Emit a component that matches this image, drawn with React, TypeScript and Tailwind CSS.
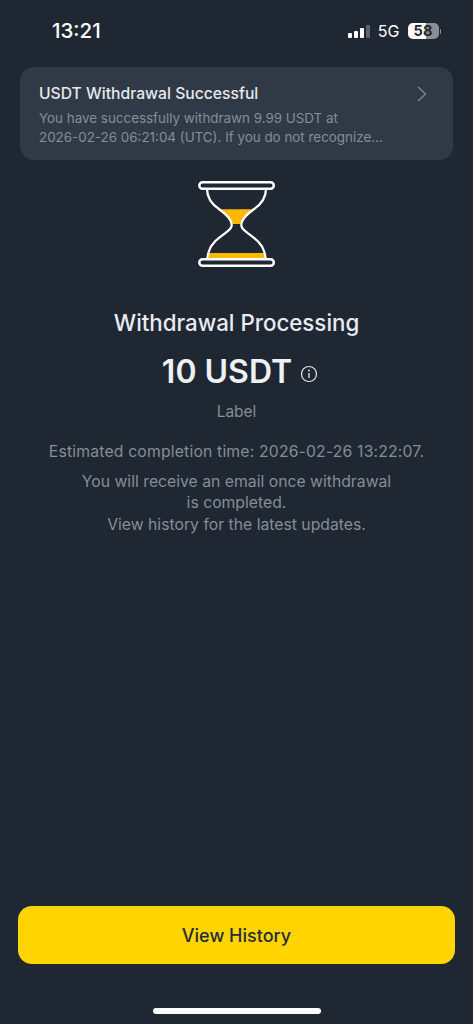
import React from "react";

function Hourglass() {
  return (
    <svg width="80" height="90" viewBox="0 0 80 90" fill="none" className="-translate-x-[0.5px]">
      <path d="M21 29.300H59C55 33 45.500 38 45 44H35C34.500 38 25 33 21 29.300Z" fill="#FFB800" />
      <rect x="12" y="73" width="56" height="6" fill="#FFB800" />
      <path
        d="M10.500 9C10.500 18 15 24 22.800 29.300C28 33 35.200 39 35.200 45C35.200 49 32 50.500 28.500 53.300C21 59 15 63 12.500 71C11.500 74 11 76 11 79M69.500 9C69.500 18 65 24 57.200 29.300C52 33 44.800 39 44.800 45C44.800 49 48 50.500 51.500 53.300C59 59 65 63 67.500 71C68.500 74 69 76 69 79"
        stroke="white"
        strokeWidth="2.300"
      />
      <rect x="2.800" y="2.200" width="74.500" height="6.600" rx="3.300" fill="#1F2732" stroke="white" strokeWidth="2.500" />
      <rect x="2.800" y="79.200" width="74.500" height="6.600" rx="3.300" fill="#1F2732" stroke="white" strokeWidth="2.500" />
    </svg>
  );
}

function Signal() {
  return (
    <div className="flex items-end gap-[2px] h-[13px]">
      <span className="w-[4px] h-[5px] rounded-[1px] bg-white" />
      <span className="w-[4px] h-[7px] rounded-[1px] bg-white" />
      <span className="w-[4px] h-[10px] rounded-[1px] bg-white" />
      <span className="w-[4px] h-[13px] rounded-[1px] bg-[#5d636b]" />
    </div>
  );
}

function Battery() {
  return (
    <div className="flex items-center gap-[1px]">
      <div className="w-[31px] h-[16px] rounded-[5px] bg-[linear-gradient(90deg,#ffffff_0%,#ffffff_58%,#8b8e92_58%,#8b8e92_100%)] flex items-center justify-center">
        <span className="text-[14.500px] leading-none font-bold text-[#23272e] tracking-[0.2px]">58</span>
      </div>
      <span className="w-[1.500px] h-[5px] rounded-r-sm bg-[#8b8e92]" />
    </div>
  );
}

export default function App() {
  return (
    <div
      className="w-[473px] h-[1024px] bg-[#1f2732] flex flex-col overflow-hidden"
      style={{ fontFamily: "Inter, 'Noto Sans', sans-serif" }}
    >
      <div className="h-[67px] shrink-0 flex justify-between pt-[20px] pl-[52px] pr-[32px]">
        <span className="text-[20.500px] leading-[22px] font-medium text-white">13:21</span>
        <div className="flex items-center gap-[8px] h-[22px]">
          <Signal />
          <span className="text-[16px] leading-none text-white">5G</span>
          <Battery />
        </div>
      </div>

      <div className="mx-[20px] h-[93px] shrink-0 rounded-[14px] bg-[#303a46] pl-[19px] pr-[25px] pt-[17px] flex justify-between">
        <div>
          <div className="text-[15.700px] leading-[20px] font-medium text-[#e7e9ec]">USDT Withdrawal Successful</div>
          <div className="mt-[5px] text-[13.400px] leading-[18.500px] text-[#858d96] whitespace-nowrap">
            <div>You have successfully withdrawn 9.99 USDT at</div>
            <div>2026-02-26 06:21:04 (UTC). If you do not recognize...</div>
          </div>
        </div>
        <svg width="12" height="18" viewBox="0 0 12 18" fill="none" className="mt-[1px]">
          <path d="M2 2L9.500 9L2 16" stroke="#7b838c" strokeWidth="1.500" />
        </svg>
      </div>

      <div className="flex flex-col items-center pt-[20px]">
        <Hourglass />
        <div className="mt-[39px] text-[22.300px] leading-[28px] font-medium text-[#e9ebee]">Withdrawal Processing</div>
        <div className="mt-[16px] ml-[7px] flex items-center h-[38px]">
          <span className="text-[32px] leading-[38px] font-semibold text-[#eef0f2]">10 USDT</span>
          <svg width="18" height="18" viewBox="0 0 18 18" fill="none" className="ml-[8px] mt-[3px]">
            <circle cx="9" cy="9" r="7.500" stroke="#e5e7ea" strokeWidth="1.200" />
            <path d="M9 8V13" stroke="#e5e7ea" strokeWidth="1.300" />
            <circle cx="9" cy="5.500" r="0.900" fill="#e5e7ea" />
          </svg>
        </div>
        <div className="mt-[11px] text-[15.500px] leading-[20px] text-[#858d96]">Label</div>
        <div className="mt-[20px] text-[15.750px] leading-[20px] tracking-[0.17px] text-[#858d96] whitespace-nowrap">
          Estimated completion time: 2026-02-26 13:22:07.
        </div>
        <div className="mt-[9px] text-[15.750px] leading-[21.300px] text-[#858d96] text-center whitespace-nowrap">
          <div>You will receive an email once withdrawal</div>
          <div>is completed.</div>
          <div>View history for the latest updates.</div>
        </div>
      </div>

      <div className="flex-1" />

      <div className="mx-[18px] h-[58px] shrink-0 rounded-[14px] bg-[#ffd400] flex items-center justify-center">
        <span className="text-[18px] leading-[28px] mt-[1px] font-medium text-[#272d36]">View History</span>
      </div>
      <div className="h-[60px] shrink-0 flex justify-center pt-[44px]">
        <div className="w-[168px] h-[6px] rounded-full bg-white" />
      </div>
    </div>
  );
}
